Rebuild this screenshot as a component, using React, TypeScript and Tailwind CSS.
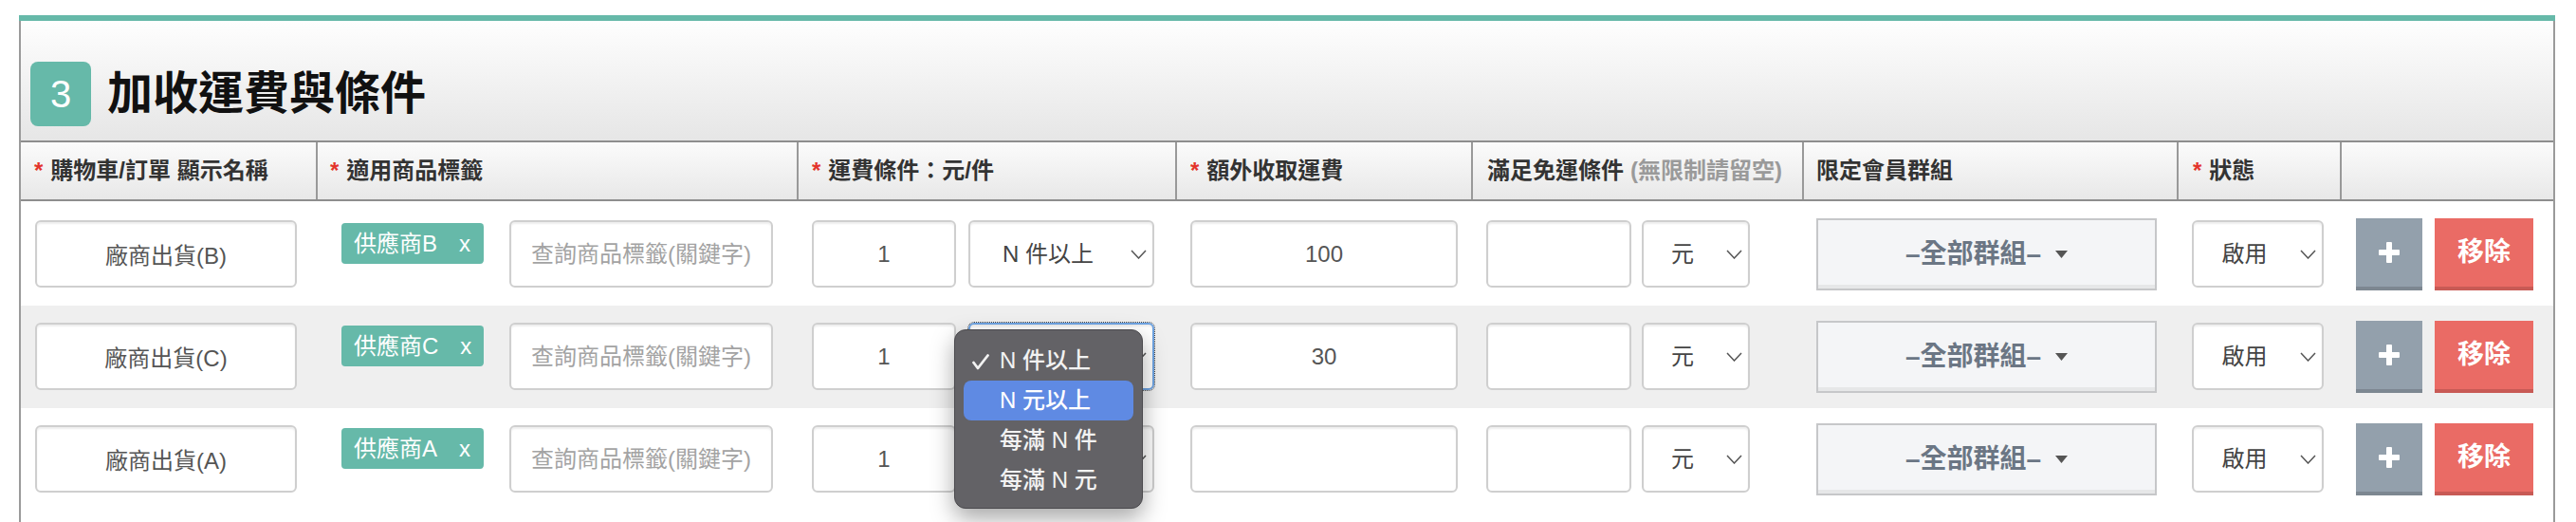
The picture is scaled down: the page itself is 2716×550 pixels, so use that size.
import React from 'react'

const FONT = "font-['Liberation_Sans','Noto_Sans_CJK_TC',sans-serif]"

const COLS = 'grid grid-cols-[313px_507px_399px_312px_349px_395px_172px_223px]'

interface ShipRow {
  id: string
  name: string
  tag: string
  qty: string
  fee: string
  bg: string
  pad: string
  open?: boolean
  covered?: boolean
}

const ROWS: ShipRow[] = [
  { id: 'b', name: '廠商出貨(B)', tag: '供應商B', qty: '1', fee: '100', bg: 'bg-white', pad: 'h-[110px] pt-[20px]' },
  { id: 'c', name: '廠商出貨(C)', tag: '供應商C', qty: '1', fee: '30', bg: 'bg-[#efefef]', pad: 'h-[108px] pt-[18px]', open: true },
  { id: 'a', name: '廠商出貨(A)', tag: '供應商A', qty: '1', fee: '', bg: 'bg-white', pad: 'h-[108px] pt-[18px]', covered: true },
]

const MENU = ['N 件以上', 'N 元以上', '每滿 N 件', '每滿 N 元']

function Req() {
  return <span className="text-[#e3342b] mr-[8px]">*</span>
}

function Chevron() {
  return (
    <svg className="absolute right-[6px] top-1/2 -translate-y-1/2" width="17" height="10" viewBox="0 0 17 10">
      <polyline points="1,1 8.5,9 16,1" fill="none" stroke="#555" strokeWidth="1.5" />
    </svg>
  )
}

function Field({ value, placeholder, className }: { value?: string; placeholder?: string; className: string }) {
  return (
    <input
      readOnly
      value={value}
      placeholder={placeholder}
      className={`h-[71px] rounded-[6px] border-2 border-[#cfcfcf] bg-white text-center text-[24px] text-[#555] placeholder:text-[#a3a3a3] shadow-[inset_0_2px_2px_rgba(0,0,0,0.07)] outline-none ${FONT} ${className}`}
    />
  )
}

function Select({ label, className, focused, hideLabel, children }: { label: string; className: string; focused?: boolean; hideLabel?: boolean; children?: React.ReactNode }) {
  return (
    <div
      className={`relative h-[71px] rounded-[6px] border-2 bg-white flex items-center justify-center pr-[28px] text-[24px] text-[#444] shadow-[inset_0_2px_2px_rgba(0,0,0,0.07)] ${
        focused ? 'border-[#6ea3e2] outline-1 outline-dotted outline-[#444]' : 'border-[#cfcfcf]'
      } ${className}`}
    >
      {/* label sits under the open menu of the row above */}
      <span className={hideLabel ? 'invisible' : ''}>{label}</span>
      <Chevron />
      {children}
    </div>
  )
}

function Menu() {
  return (
    <div className="absolute left-[-17px] top-[5px] z-10 w-[199px] h-[189px] rounded-[12px] bg-[#636266] border-[1.5px] border-[#4a494d] shadow-[0_10px_24px_rgba(0,0,0,0.35)] pt-[11px] px-[9px] text-[24px] font-medium text-[#f2f2f2]">
      {MENU.map((m, i) => (
        <div key={m} className={`relative h-[42px] rounded-[8px] flex items-center pl-[38px] ${i === 1 ? 'bg-[#5f8ae3] text-white' : ''}`}>
          {i === 0 && (
            <svg className="absolute left-[9px] top-[14px]" width="18" height="17" viewBox="0 0 18 17">
              <polyline points="1.5,9 6,15 16.5,1.5" fill="none" stroke="#f2f2f2" strokeWidth="2.8" strokeLinecap="round" strokeLinejoin="round" />
            </svg>
          )}
          {m}
        </div>
      ))}
    </div>
  )
}

function Row({ r }: { r: ShipRow }) {
  return (
    <div className={`${COLS} items-start ${r.bg} ${r.pad}`}>
      <div className="pl-[15px]">
        <Field value={r.name} className="w-[276px]" />
      </div>

      <div className="flex items-start pl-[25px]">
        <div className="mt-[3px] w-[150px] h-[43px] rounded-[4px] bg-[#66b9a9] text-white text-[24px] flex items-center pl-[13px]">
          {r.tag}
          <span className="ml-[23px]">x</span>
        </div>
        <Field placeholder="查詢商品標籤(關鍵字)" className="ml-[27px] w-[278px]" />
      </div>

      <div className="flex pl-[14px] gap-[13px]">
        <Field value={r.qty} className="w-[152px]" />
        <Select label="N 件以上" className="w-[196px]" focused={r.open} hideLabel={r.covered}>
          {r.open && <Menu />}
        </Select>
      </div>

      <div className="pl-[14px]">
        <Field value={r.fee} className="w-[282px]" />
      </div>

      <div className="flex pl-[14px] gap-[11px]">
        <Field className="w-[153px]" />
        <Select label="元" className="w-[114px]" />
      </div>

      <div className="pl-[13px]">
        <div className="mt-[-2px] w-[359px] h-[76px] border-2 border-[#c6c7c9] bg-[#f4f5f7] shadow-[inset_0_-4px_0_#e6e7e8] flex items-center justify-center gap-[15px] text-[28px] font-semibold text-[#6b7684]">
          –全部群組–
          <svg width="13" height="8" viewBox="0 0 13 8">
            <polygon points="0,0 13,0 6.5,8" fill="#555" />
          </svg>
        </div>
      </div>

      <div className="pl-[14px]">
        <Select label="啟用" className="w-[139px]" />
      </div>

      <div className="flex pl-[15px] gap-[13px] mt-[-2px]">
        <button className="w-[70px] h-[76px] bg-[#93a0ac] border-b-4 border-[#7d8791] flex items-center justify-center">
          <svg width="22" height="22" viewBox="0 0 22 22">
            <rect x="8" y="0" width="6" height="22" rx="1" fill="#fff" />
            <rect x="0" y="8" width="22" height="6" rx="1" fill="#fff" />
          </svg>
        </button>
        <button className="w-[104px] h-[76px] bg-[#ea6b65] border-b-4 border-[#c85a55] text-white text-[28px] font-semibold flex items-center justify-center">
          移除
        </button>
      </div>
    </div>
  )
}

export default function App() {
  return (
    <div className={`w-[2716px] h-[550px] bg-white overflow-hidden pt-[16px] pl-[20px] ${FONT}`}>
      <div className="w-[2674px] h-[534px] flex flex-col">
        <div className="h-[6px] bg-[#66b9a9]" />

        <div className="flex-1 flex flex-col border-x-2 border-[#9a9a9a]">
          {/* Section title */}
          <div className="h-[128px] shrink-0 border-b-2 border-[#8e8e8e] bg-linear-to-b from-[#fefefe] to-[#e6e6e6] flex items-end pb-[15px] pl-[10px]">
            <div className="flex items-center">
              <div className="w-[64px] h-[68px] rounded-[8px] bg-[#66b9a9] text-white text-[40px] flex items-center justify-center">3</div>
              <h2 className="ml-[17px] text-[48px] leading-none font-semibold text-[#111]">加收運費與條件</h2>
            </div>
          </div>

          {/* Column headings */}
          <div className={`${COLS} h-[62px] shrink-0 border-b-2 border-[#8e8e8e] bg-linear-to-b from-[#fbfbfb] to-[#e8e8e8] text-[24px] font-semibold text-[#333]`}>
            <div className="flex items-center pl-[14px] border-r-2 border-[#999]"><Req />購物車/訂單 顯示名稱</div>
            <div className="flex items-center pl-[13px] border-r-2 border-[#999]"><Req />適用商品標籤</div>
            <div className="flex items-center pl-[14px] border-r-2 border-[#999]"><Req />運費條件：元/件</div>
            <div className="flex items-center pl-[14px] border-r-2 border-[#999]"><Req />額外收取運費</div>
            <div className="flex items-center pl-[15px] border-r-2 border-[#999]">
              滿足免運條件<span className="ml-[7px] text-[#9a9a9a]">(無限制請留空)</span>
            </div>
            <div className="flex items-center pl-[13px] border-r-2 border-[#999]">限定會員群組</div>
            <div className="flex items-center pl-[15px] border-r-2 border-[#999]"><Req />狀態</div>
            <div />
          </div>

          {ROWS.map(r => <Row key={r.id} r={r} />)}
        </div>
      </div>
    </div>
  )
}
